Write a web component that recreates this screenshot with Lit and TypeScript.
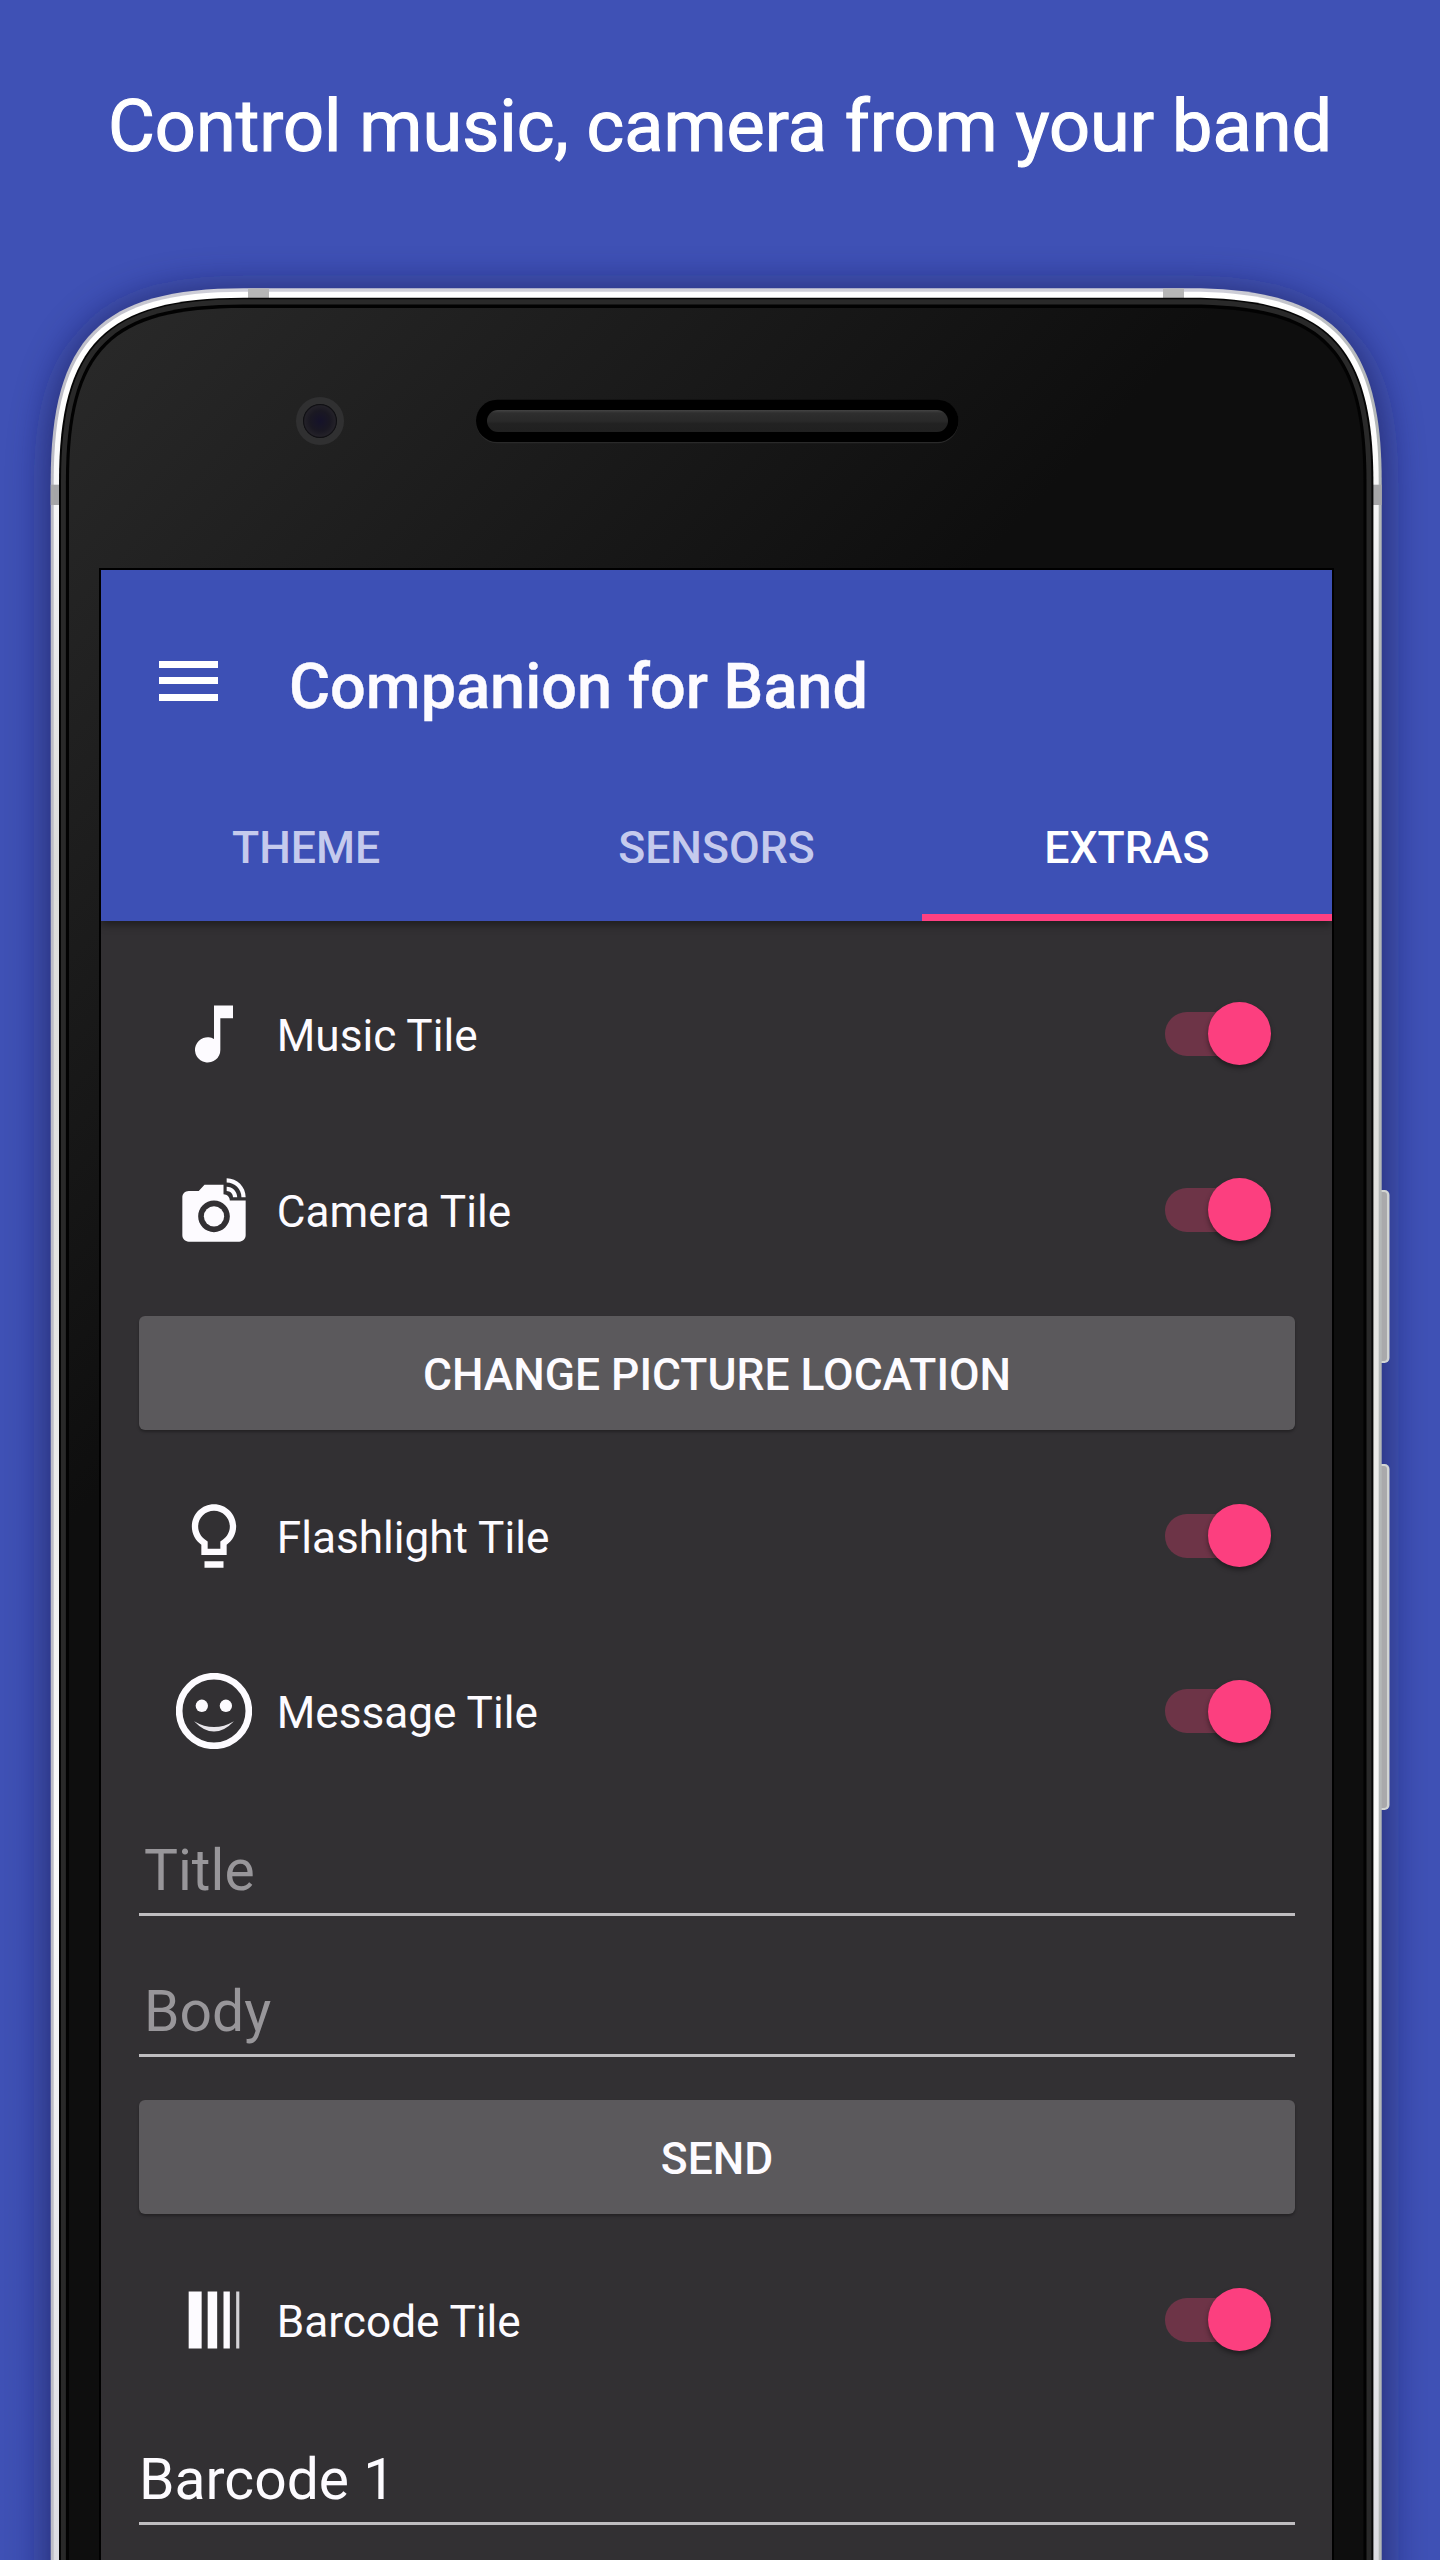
import { LitElement, html, css, svg } from "lit";
import { customElement, property } from "lit/decorators.js";

/** Closed outline of the handset, inset from the outer rim on the sides and top. */
function shell(side: number, top: number): string {
  const l = 50.7 + side;
  const r = 1381.7 - side;
  const t = 288.3 + top;
  const reach = 193 - side;
  const c = 50 - side * 0.45;
  return `M${l} 2700V${t + reach}C${l} ${t + c} ${l + c} ${t} ${l + reach} ${t}H${r - reach}C${r - c} ${t} ${r} ${t + c} ${r} ${t + reach}V2700Z`;
}

const icons: Record<string, unknown> = {
  music: svg`<path d="M12 3v10.55A4 4 0 1 0 14 17V7h4V3z"/>`,
  camera: svg`<circle cx="12" cy="14" r="3.2"/>
    <path d="M16 3.33c2.58 0 4.67 2.09 4.67 4.67H22c0-3.31-2.69-6-6-6v1.33M16 6c1.11 0 2 .89 2 2h1.33c0-1.84-1.49-3.33-3.33-3.33V6"/>
    <path d="M17 9c0-1.11-.89-2-2-2V4H9L7.17 6H4c-1.1 0-2 .9-2 2v12c0 1.1.9 2 2 2h16c1.1 0 2-.9 2-2V9h-5zm-5 10c-2.76 0-5-2.24-5-5s2.24-5 5-5 5 2.24 5 5-2.24 5-5 5z"/>`,
  bulb: svg`<path d="M9 20h6v2H9zM12 2C8.14 2 5 5.14 5 9c0 2.38 1.19 4.47 3 5.74V18h8v-3.26c1.81-1.27 3-3.36 3-5.74 0-3.86-3.14-7-7-7zm2.85 11.1l-.85.6V16h-4v-2.3l-.85-.6C7.8 12.16 7 10.63 7 9c0-2.76 2.24-5 5-5s5 2.24 5 5c0 1.63-.8 3.16-2.15 4.1z"/>`,
  smile: svg`<circle cx="12" cy="12" r="11" fill="none" stroke="currentColor" stroke-width="2.1"/>
    <circle cx="8.15" cy="10.35" r="1.95"/><circle cx="15.75" cy="10.35" r="1.95"/>
    <path d="M5.7 15.2Q12 21.8 18.3 15.2Q12 18.9 5.7 15.2z" opacity=".9"/>`,
  barcode: svg`<path d="M4 3h4.1v18H4zM10 3h3v18h-3zM15 3h2v18h-2z"/><path d="M19 3h1v18h-1z" opacity=".8"/>`,
};

@customElement("phone-frame")
export class PhoneFrame extends LitElement {
  static styles = css`
    :host { display: block; }
    .art { display: block; width: 1440px; height: 2560px; }
  `;

  render() {
    return html`<svg class="art" viewBox="0 0 1440 2560">
      <defs>
        <linearGradient id="glass" gradientUnits="userSpaceOnUse" x1="90" y1="320" x2="680" y2="880">
          <stop offset="0" stop-color="#292929" /><stop offset="1" stop-color="#0e0e0e" />
        </linearGradient>
        <linearGradient id="rim" x1="0" x2="1" y1="0" y2="0">
          <stop offset="0" stop-color="#bdbdc6" /><stop offset=".12" stop-color="#cfcfd9" />
          <stop offset=".88" stop-color="#cfcfd9" /><stop offset="1" stop-color="#b3b7b7" />
        </linearGradient>
        <linearGradient id="metal" gradientUnits="userSpaceOnUse" x1="0" y1="288" x2="0" y2="2560">
          <stop offset="0" stop-color="#fff" /><stop offset=".06" stop-color="#fdfdfd" />
          <stop offset=".14" stop-color="#ececee" /><stop offset=".25" stop-color="#dcdcda" />
          <stop offset=".45" stop-color="#e4e4e2" /><stop offset=".68" stop-color="#fbfbfb" />
          <stop offset="1" stop-color="#dcdce2" />
        </linearGradient>
        <linearGradient id="grille" x1="0" x2="0" y1="0" y2="1">
          <stop offset="0" stop-color="#444" /><stop offset=".14" stop-color="#2e2e2e" />
          <stop offset=".5" stop-color="#292929" /><stop offset=".62" stop-color="#222" />
          <stop offset="1" stop-color="#202020" />
        </linearGradient>
        <radialGradient id="lens">
          <stop offset="0" stop-color="#15122a" /><stop offset=".6" stop-color="#1a1822" />
          <stop offset=".9" stop-color="#232128" /><stop offset="1" stop-color="#060609" />
        </radialGradient>
        <filter id="soft" filterUnits="userSpaceOnUse" x="-60" y="200" width="1560" height="2600">
          <feGaussianBlur stdDeviation="19" />
        </filter>
      </defs>
      <path d=${shell(-4, 0)} fill="#14184a" opacity=".62" filter="url(#soft)" />
      <rect x="1372" y="1190" width="17.5" height="173" rx="5" fill="#d2d5d3" />
      <rect x="1372" y="1192" width="15" height="169" rx="3" fill="#a9a9ab" />
      <rect x="1372" y="1464" width="17.5" height="346" rx="5" fill="#d2d5d3" />
      <rect x="1372" y="1466" width="15" height="342" rx="3" fill="#a9a9ab" />
      <path d=${shell(0, 0)} fill="url(#rim)" />
      <path d=${shell(3, 3.5)} fill="url(#metal)" />
      <g fill="#b6b6b6">
        <rect x="248" y="288.5" width="21" height="10" /><rect x="1163" y="288.5" width="21" height="10" />
        <rect x="50.7" y="484.7" width="9" height="20.3" fill="#a6a6a8" />
        <rect x="1373" y="484.7" width="8.7" height="20.3" fill="#a6a6a8" />
      </g>
      <path d=${shell(8.3, 9.5)} fill="#050505" />
      <path d=${shell(10.3, 11)} fill="#292929" />
      <path d=${shell(15.2, 16.2)} fill="#020202" />
      <path d=${shell(18.3, 19.7)} fill="url(#glass)" />
      <circle cx="320" cy="421" r="24" fill="#303031" />
      <circle cx="320" cy="421" r="17" fill="url(#lens)" />
      <rect x="476" y="400.3" width="482.5" height="43" rx="21.5" fill="#2a2a2a" />
      <rect x="476" y="399.7" width="482.5" height="42.3" rx="21.1" fill="#000" />
      <rect x="487" y="410" width="461" height="22" rx="11" fill="url(#grille)" />
      <rect x="99" y="568" width="1235" height="2000" fill="#000" />
    </svg>`;
  }
}

@customElement("tile-row")
export class TileRow extends LitElement {
  @property() icon = "";
  @property() label = "";

  static styles = css`
    :host { display: flex; align-items: center; height: 175.7px; padding: 0 61px 0 75px; flex: none; }
    .icon { width: 76px; height: 76px; fill: currentColor; flex: none; overflow: hidden; }
    .label { flex: 1; padding: 4px 0 0 24.8px; font-size: 44.15px; line-height: 52px; }
    .track { position: relative; width: 106px; height: 44px; flex: none; border-radius: 22px; background: linear-gradient(90deg, #6d3447 75px, transparent 75px); }
    .thumb { position: absolute; right: 0; top: -9.4px; width: 62.8px; height: 62.8px; border-radius: 50%; background: #fc3f7f; box-shadow: 0 3px 5px rgba(0, 0, 0, 0.4); }
  `;

  render() {
    return html`<svg class="icon" viewBox="0 0 24 24">${icons[this.icon]}</svg>
      <span class="label">${this.label}</span>
      <span class="track"><span class="thumb"></span></span>`;
  }
}

@customElement("app-root")
export class AppRoot extends LitElement {
  static styles = css`
    :host { display: block; width: 1440px; height: 2560px; overflow: hidden; background: #3f51b5; color: #fff; font-family: Roboto, "Liberation Sans", sans-serif; }
    .stage { position: relative; height: 2560px; overflow: hidden; display: flex; flex-direction: column; align-items: center; }
    .frame { position: absolute; left: 0; top: 0; }
    .headline { position: relative; box-sizing: border-box; height: 570px; flex: none; margin: 0; padding-top: 84.6px; font-size: 72px; line-height: 84px; font-weight: 400; white-space: nowrap; -webkit-text-stroke: 1.1px #fff; }
    .screen { position: relative; left: -3.5px; width: 1231px; height: 1990px; overflow: hidden; background: #323033; display: flex; flex-direction: column; color: #fdfbff; }
    .bar { position: relative; z-index: 1; height: 351px; flex: none; display: flex; flex-direction: column; background: #3d50b5; box-shadow: 0 3px 9px rgba(0, 0, 0, 0.45); }
    .toolbar { height: 221px; display: flex; align-items: flex-start; padding-left: 58.3px; }
    .menu { display: grid; gap: 9.6px; width: 58.7px; margin-top: 90.6px; }
    .line { height: 7px; background: #fff; }
    .title { margin: 80.6px 0 0 71px; font-size: 63px; line-height: 72px; font-weight: 500; white-space: nowrap; -webkit-text-stroke: 0.4px #fff; }
    .tabs { flex: 1; display: grid; grid-template-columns: repeat(3, 1fr); }
    .tab { display: flex; justify-content: center; padding-top: 30.5px; font-size: 44.6px; line-height: 52px; font-weight: 500; color: #c5caed; }
    .active { color: #fff; border-bottom: 7px solid #ff4081; }
    .content { display: flex; flex-direction: column; padding-top: 25px; }
    .button { box-sizing: border-box; height: 114px; flex: none; margin: 18.3px 37px 18px 38px; padding-top: 4px; border-radius: 6px; background: #5b595c; box-shadow: 0 2px 3px rgba(0, 0, 0, 0.3); display: flex; align-items: center; justify-content: center; font-size: 44.4px; font-weight: 500; }
    .field { box-sizing: border-box; height: 117px; flex: none; margin: 0 37px 24.3px 38px; padding: 39px 5px 0; border-bottom: 3.4px solid #bfbdc0; font-size: 57px; line-height: 66px; color: #98969a; }
    .value { padding-left: 0; color: #fdfbff; }
  `;

  render() {
    return html`<div class="stage">
      <phone-frame class="frame"></phone-frame>
      <h1 class="headline">Control music, camera from your band</h1>
      <main class="screen">
        <header class="bar">
          <div class="toolbar">
            <div class="menu"><i class="line"></i><i class="line"></i><i class="line"></i></div>
            <div class="title">Companion for Band</div>
          </div>
          <nav class="tabs">
            <span class="tab">THEME</span>
            <span class="tab">SENSORS</span>
            <span class="tab active">EXTRAS</span>
          </nav>
        </header>
        <section class="content">
          <tile-row icon="music" label="Music Tile"></tile-row>
          <tile-row icon="camera" label="Camera Tile"></tile-row>
          <div class="button">CHANGE PICTURE LOCATION</div>
          <tile-row icon="bulb" label="Flashlight Tile"></tile-row>
          <tile-row icon="smile" label="Message Tile"></tile-row>
          <div class="field">Title</div>
          <div class="field">Body</div>
          <div class="button">SEND</div>
          <tile-row icon="barcode" label="Barcode Tile"></tile-row>
          <div class="field value">Barcode 1</div>
        </section>
      </main>
    </div>`;
  }
}
